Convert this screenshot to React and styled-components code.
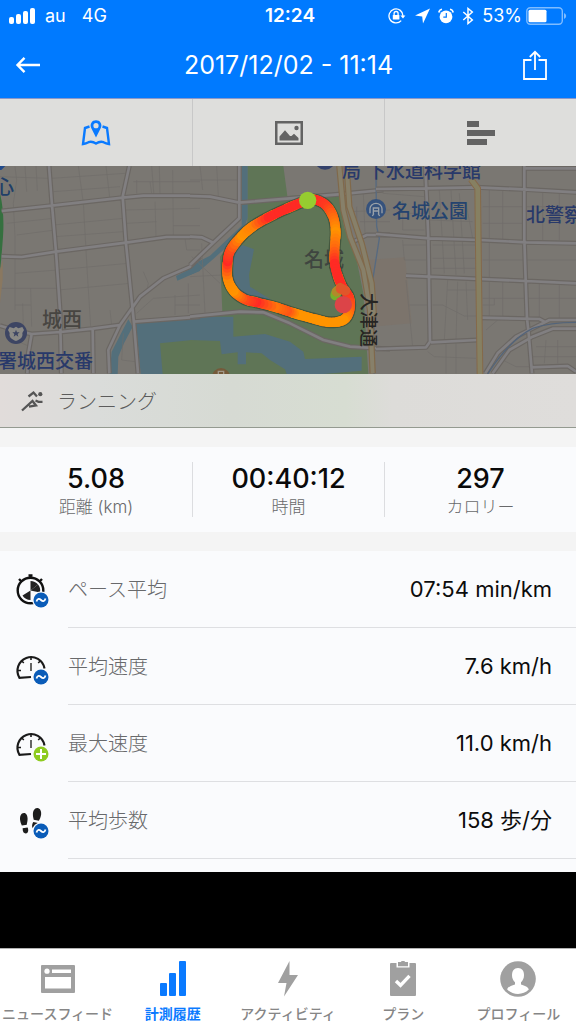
import React from "react";
import styled, { createGlobalStyle } from "styled-components";

const latin = `Inter, "Noto Sans CJK JP", sans-serif`;
const japanese = `"Noto Sans CJK JP", Inter, sans-serif`;

const GlobalStyle = createGlobalStyle`
  *, *::before, *::after { box-sizing: border-box; }
  body { margin: 0; background: #000; font-family: ${latin}; }
  button { margin: 0; padding: 0; border: 0; background: none; font: inherit; color: inherit; cursor: pointer; }
  svg { display: block; flex: none; }
`;

const Page = styled.div`
  min-height: 100vh;
  display: flex;
  flex-direction: column;
  background: #000;
`;

const Header = styled.header`
  background: #007aff;
  color: #fff;
`;

const StatusBar = styled.div`
  height: 32px;
  padding: 0 9px;
  display: grid;
  grid-template-columns: 1fr auto 1fr;
  align-items: center;
  font-size: 18px;
  line-height: 24px;
`;

const StatusGroup = styled.div`
  display: flex;
  align-items: center;
  justify-content: ${(p) => (p.$end ? "flex-end" : "flex-start")};
  gap: ${(p) => (p.$end ? 8 : 10)}px;
`;

const Network = styled.span`
  margin-left: 6px;
`;

const BatteryGroup = styled.span`
  display: flex;
  align-items: center;
  gap: 4px;
`;

const Clock = styled.time`
  font-size: 19px;
  font-weight: 600;
  padding-left: 4px;
`;

const NavBar = styled.div`
  height: 66px;
  padding: 0 26px 0 15px;
  display: grid;
  grid-template-columns: 40px 1fr 28px;
  align-items: center;
`;

const Title = styled.h1`
  margin: 0;
  font-size: 25px;
  line-height: 32px;
  font-weight: 400;
  text-align: center;
`;

const ViewTabs = styled.nav`
  height: 68px;
  display: grid;
  grid-template-columns: repeat(3, 1fr);
  background: #dededc;
  border-top: 1px solid #8b97c8;
`;

const ViewTab = styled.button`
  display: flex;
  align-items: center;
  justify-content: center;
  color: ${(p) => (p.$active ? "#0a7aff" : "#636363")};
  & + & { border-left: 1px solid #c8c8c8; }
`;

const MapPanel = styled.section`
  height: 208px;
  background: #7a7772;
  overflow: hidden;
  > svg { width: 100%; height: 100%; }
`;

const MapText = styled.text`
  font-family: ${japanese};
  font-weight: 500;
  font-size: ${(p) => p.$size || 19}px;
  fill: ${(p) => p.$fill || "#28396a"};
`;

const ActivityBar = styled.div`
  height: 54px;
  padding: 0 21px;
  display: flex;
  align-items: center;
  gap: 13px;
  border-bottom: 1px solid #949a90;
  background: linear-gradient(90deg, #e1dcda 0%, #dadcda 17%, #d6dad3 40%, #d7ddd2 60%, #dddcd9 68%, #dfdddb 100%);
  color: #5c5c5c;
  font-family: ${japanese};
  font-size: 20px;
  line-height: 28px;
  font-weight: 300;
`;

const Content = styled.main`
  background: #f4f4f4;
  padding-top: 19px;
`;

const Summary = styled.dl`
  margin: 0 0 19px;
  padding: 15px 0;
  display: grid;
  grid-template-columns: repeat(3, 1fr);
  background: #fafbfd;
`;

const SummaryItem = styled.div`
  height: 55px;
  padding-top: 2px;
  display: flex;
  flex-direction: column-reverse;
  justify-content: center;
  align-items: center;
  & + & { border-left: 1px solid #dcdde0; }
`;

const SummaryLabel = styled.dt`
  font-family: ${latin};
  font-size: 17px;
  line-height: 24px;
  font-weight: 300;
  color: #68696b;
`;

const SummaryValue = styled.dd`
  margin: 0;
  font-size: 27px;
  line-height: 32px;
  font-weight: 500;
  color: #0a0a0a;
`;

const MetricList = styled.dl`
  margin: 0;
  padding-bottom: 13px;
  background: #fafbfd;
`;

const Metric = styled.div`
  display: grid;
  grid-template-columns: 68px 1fr;
`;

const MetricIcon = styled.span`
  padding: 22px 0 0 14px;
`;

const MetricBody = styled.div`
  height: 77px;
  padding-right: 24px;
  display: flex;
  align-items: center;
  justify-content: space-between;
  border-bottom: 1px solid #dedfe2;
`;

const MetricLabel = styled.dt`
  font-family: ${japanese};
  font-size: 20px;
  line-height: 28px;
  font-weight: 300;
  color: #68696b;
`;

const MetricValue = styled.dd`
  margin: 0;
  font-size: 22px;
  line-height: 28px;
  color: #0c0c0c;
`;

const TabBar = styled.nav`
  height: 76px;
  margin-top: auto;
  display: grid;
  grid-template-columns: repeat(5, minmax(0, 1fr));
  background: #fff;
  border-top: 1px solid #b2b2b2;
`;

const TabItem = styled.button`
  display: flex;
  flex-direction: column;
  align-items: center;
  justify-content: flex-end;
  gap: 5px;
  color: ${(p) => (p.$active ? "#0a7aff" : "#a0a0a0")};
`;

const TabLabel = styled.span`
  font-family: ${japanese};
  font-size: 14px;
  line-height: 22px;
  font-weight: ${(p) => (p.$active ? 700 : 500)};
  white-space: nowrap;
  color: ${(p) => (p.$active ? "#0a7aff" : "#868686")};
`;

/* ---------- status icons ---------- */

const SignalIcon = () => (
  <svg width="26" height="16" viewBox="0 0 26 16" fill="#fff" aria-hidden="true">
    <rect x="0" y="9" width="5" height="7" rx="2" />
    <rect x="7" y="6" width="5" height="10" rx="2" />
    <rect x="14" y="3" width="5" height="13" rx="2" />
    <rect x="21" y="0" width="5" height="16" rx="2" />
  </svg>
);

const LockRotationIcon = () => (
  <svg width="18" height="16" viewBox="0 0 18 16" fill="none" stroke="#fff" strokeWidth="1.3" aria-hidden="true">
    <path d="M13.2 12.6A7 7 0 1 1 15 8" />
    <path d="M12.4 7.4h5L15 10.600z" fill="#fff" stroke="none" />
    <rect x="4.800" y="7" width="6.600" height="4.600" rx=".6" fill="#fff" stroke="none" />
    <path d="M6.100 7V5.500a2 2 0 0 1 4 0V7" />
  </svg>
);

const LocationIcon = () => (
  <svg width="16" height="16" viewBox="0 0 16 16" fill="#fff" aria-hidden="true">
    <path d="M16 .5 9 15.500 8.200 8.500 1 7.500z" />
  </svg>
);

const AlarmIcon = () => (
  <svg width="16" height="16" viewBox="0 0 16 16" fill="none" aria-hidden="true">
    <circle cx="8" cy="8.800" r="6.400" fill="#fff" />
    <path d="M.8 4.500A4 4 0 0 1 4 1.300M15.200 4.500A4 4 0 0 0 12 1.300" stroke="#fff" strokeWidth="1.600" />
    <path d="M8.300 5v4.200H5.300" stroke="#007aff" strokeWidth="1.200" />
  </svg>
);

const BluetoothIcon = () => (
  <svg width="12" height="18" viewBox="0 0 12 18" fill="none" stroke="#fff" strokeWidth="1.500" aria-hidden="true">
    <path d="m1.300 5 9 8L6 16.500v-15L10.300 5l-9 8" />
  </svg>
);

const BatteryIcon = () => (
  <svg width="41" height="18" viewBox="0 0 41 18" fill="none" aria-hidden="true">
    <rect x=".8" y=".8" width="35.500" height="16.400" rx="3.500" stroke="#7fbcff" strokeWidth="1.400" />
    <rect x="2.500" y="2.800" width="18" height="12.400" rx="1.500" fill="#fff" />
    <path d="M38 6v6q2.200-1 2.200-3T38 6z" fill="#7fbcff" />
  </svg>
);

/* ---------- navigation icons ---------- */

const BackIcon = () => (
  <svg width="26" height="18" viewBox="0 0 26 18" fill="none" stroke="#fff" strokeWidth="2.400" aria-hidden="true">
    <path d="M25 9H3M9.500 1.800 2.500 9l7 7.200" />
  </svg>
);

const ShareIcon = () => (
  <svg width="26" height="31" viewBox="0 0 26 31" fill="none" stroke="#fff" strokeWidth="1.800" aria-hidden="true">
    <path d="M9.500 10H2v19h22V10h-7.500M13 20V2M7.800 7 13 1.800 18.200 7" />
  </svg>
);

const MapPinIcon = () => (
  <svg width="30" height="28" viewBox="0 0 30 28" fill="none" stroke="currentColor" aria-hidden="true">
    <path d="M8.500 7.500 4 9 2 25q3-.5 5.500-1.800Q11 22 15 24.500q4-2.500 7.500-1.300Q25 24.500 28 25L26 9l-4.500-1.500" strokeWidth="2.400" />
    <path d="M15 18.500 10.200 9a5.400 5.400 0 1 1 9.600 0zM15 4.100a2.600 2.600 0 1 0 0 5.200 2.600 2.600 0 0 0 0-5.200z" fill="currentColor" fillRule="evenodd" stroke="none" />
  </svg>
);

const PhotoIcon = () => (
  <svg width="28" height="24" viewBox="0 0 28 24" fill="currentColor" aria-hidden="true">
    <path d="M0 0h28v24H0zM2.500 2.500v19h23v-19z" fillRule="evenodd" />
    <path d="M4.500 19.500v-4L10 9.300l5 5.700h1.500l2.500-2.300 4.500 4.300v2.500z" />
    <circle cx="21.500" cy="7" r="2.200" />
  </svg>
);

const BarsIcon = () => (
  <svg width="28" height="24" viewBox="0 0 28 24" fill="currentColor" aria-hidden="true">
    <path d="M0 0h12v6H0zM0 9h28v6H0zM0 18h20v6H0z" />
  </svg>
);

const RunIcon = () => (
  <svg width="23" height="22" viewBox="0 0 23 22" fill="none" stroke="#555" strokeWidth="2.300" aria-hidden="true">
    <path d="M1 20.500 11.500 11l3.500 4.500-7 1.200M7.500 6.500l5-4 3.500 4M14.500 10.500l3 1.300h4" />
    <circle cx="19.300" cy="4.200" r="2.100" fill="#555" stroke="none" />
  </svg>
);

/* ---------- metric icons ---------- */

const AverageBadge = () => (
  <g>
    <circle cx="27" cy="27" r="8.800" fill="#fafbfd" />
    <circle cx="27" cy="27" r="7.500" fill="#0a5cb8" />
    <path d="M22.500 28.500c1-3.500 3-3 4.500-1.500s3.500 2 4.500-1.500" fill="none" stroke="#fff" strokeWidth="1.800" />
  </g>
);

const MaxBadge = () => (
  <g>
    <circle cx="27" cy="27" r="8.800" fill="#fafbfd" />
    <circle cx="27" cy="27" r="7.500" fill="#8ecb20" />
    <path d="M27 22v10M22 27h10" stroke="#fff" strokeWidth="2" />
  </g>
);

const PaceIcon = () => (
  <svg width="36" height="36" viewBox="0 0 36 36" fill="none" aria-hidden="true">
    <circle cx="16.500" cy="17.500" r="12.800" stroke="#111" strokeWidth="2.400" />
    <path d="M16.500 4.500V2M14.500 2.500h4M7 8 5 6M26 8l2-2" stroke="#111" strokeWidth="2.400" />
    <path d="M16.500 17.500V8a9.500 9.500 0 0 1 7.500 3.500z" fill="#222" />
    <path d="M16.500 17.500 24 11.500a9.500 9.500 0 0 1 2 8zM16.500 17.500V27a9.500 9.500 0 0 1-8-4.500z" fill="#222" />
    <AverageBadge />
  </svg>
);

const GaugeIcon = ({ max }) => (
  <svg width="36" height="36" viewBox="0 0 36 36" fill="none" stroke="#1a1a1a" aria-hidden="true">
    <path d="M17 27 5.500 27.800A13.600 13.600 0 1 1 30.500 18.500" strokeWidth="2.200" />
    <path d="M17 7v3M7.800 11l2 2M26.200 11l-2 2M4 20.500h3M30 20.500h-3" strokeWidth="1.600" />
    <path d="M17 13v8" stroke="#555" strokeWidth="1.800" />
    {max ? <g stroke="none"><MaxPlus /></g> : <g stroke="none"><AverageBadge /></g>}
  </svg>
);

const MaxPlus = MaxBadge;

const StepsIcon = () => (
  <svg width="36" height="36" viewBox="0 0 36 36" fill="#1c1c1c" aria-hidden="true">
    <path d="M10 9c-3 0-4.500 3.500-3.800 7.500.3 2 1 3.500 1.600 5l5-.7c.2-2 .8-3.500.8-6C13.600 11.500 12.300 9 10 9z" />
    <path d="m8.600 24.300 5-.8c1.300 3 .4 5.800-1.800 6-2 .1-3.200-1.700-3.200-5.200z" />
    <path d="M23.500 4c-3-.3-4.500 3-4.600 6-.1 2.500.6 4 .8 5.800l5.200 1c.8-1.500 1.800-3.500 2.200-6C27.600 7.300 26.200 4.300 23.500 4z" />
    <path d="m19.200 18 4.800 1-1 4-4 1.500c-1.500-1.500-1-4 .2-6.500z" />
    <AverageBadge />
  </svg>
);

/* ---------- bottom tab icons ---------- */

const FeedIcon = () => (
  <svg width="36" height="36" viewBox="0 0 36 36" aria-hidden="true">
    <path d="M2 4h32a1 1 0 0 1 1 1v26a1 1 0 0 1-1 1H2a1 1 0 0 1-1-1V5a1 1 0 0 1 1-1zM5 16v11.500h26V16zM12 8.500v3.500h19V8.500z" fill="currentColor" fillRule="evenodd" />
    <circle cx="7" cy="10.200" r="2.600" fill="#fff" />
  </svg>
);

const HistoryIcon = () => (
  <svg width="36" height="36" viewBox="0 0 36 36" fill="currentColor" aria-hidden="true">
    <rect x="5" y="22" width="7" height="13" rx="1" />
    <rect x="14" y="12" width="7" height="23" rx="1" />
    <rect x="24" y="0" width="7" height="35" rx="1" />
  </svg>
);

const BoltIcon = () => (
  <svg width="36" height="36" viewBox="0 0 36 36" fill="currentColor" aria-hidden="true">
    <path d="M19.500 0 8 22h8.500l-2.500 13.500L28 14h-8.500z" />
  </svg>
);

const PlanIcon = () => (
  <svg width="36" height="36" viewBox="0 0 36 36" aria-hidden="true">
    <rect x="5" y="2" width="26" height="33" rx="1" fill="currentColor" />
    <path d="M11.500 0h13v6.500h-13z" fill="#fff" />
    <path d="M13 1h3q.5-1.500 2-1.500T20 1h3v4.300H13z" fill="currentColor" />
    <path d="m11 20 4.500 4.300 9-9.500" fill="none" stroke="#fff" strokeWidth="3.400" />
  </svg>
);

const ProfileIcon = () => (
  <svg width="36" height="36" viewBox="0 0 36 36" aria-hidden="true">
    <circle cx="18" cy="18" r="17.800" fill="currentColor" />
    <path d="M18 7c-4 0-6 3-6 7.200 0 3 1.300 5.500 3 7v2.200C11 25 8 25.500 7.200 28.500a15.500 15.500 0 0 0 21.600 0C28 25.500 25 25 21 23.400v-2.200c1.700-1.500 3-4 3-7C24 10 22 7 18 7z" fill="#fff" />
  </svg>
);

/* ---------- map drawing ---------- */

const streetsWest =
  "M147 18 156 135 168 275 180 450 184 640M388 18 368 110 378 250 402 490 414 640M5 153 155 137 368 113 430 107H570M5 289 65 291 168 275 378 248 500 231H570M600 290 570 320 490 355 420 410 360 495 325 570 328 640M0 497 50 512 95 522 182 516 278 506 360 495M95 522 85 580 82 640M278 506 280 640M402 485 600 470";
const streetsCentre =
  "M0 108 60 110 148 128 445 103 580 90M148 18V175L70 248 0 315M0 230 35 232 70 248M0 470 150 455 220 457 300 490 400 540 480 560 600 567M600 225 530 225 490 245";
const streetsEast =
  "M0 87 150 85 300 82 440 88 600 97M0 222 160 235 310 240 450 247 600 250M90 347 310 357 450 363 600 370M148 18 157 235 162 545 150 562 0 567M445 18V240L453 475 458 520 468 640M310 473 490 477 505 485M165 547 305 540M328 640 365 580 420 530 520 480H600M350 640 400 570 470 530 530 506H600M465 622 575 618 600 635M445 25H600";
const lanesWest =
  "M45 20 50 60 40 130 45 230 45 450M75 18 80 95M108 18 112 92M235 18 250 130 262 340 272 500M318 18 330 120M455 18 462 110M478 18 480 105M518 30 520 225M0 50 145 55M155 55 375 40M160 95 360 80M20 190 160 175M50 225 165 210M160 195 370 175M165 230 370 215M165 330 385 310M5 385 175 385M45 340 172 330M175 390 390 370M375 150 600 145M380 190 470 185M520 197H600M410 60 410 100M450 65 455 100M400 65 600 65M465 125 468 230M555 235 560 270H600M430 335 445 370 440 395M410 460 460 415 600 405M525 405V465M565 370V460M525 435H600M68 430 70 500M92 385 95 500M45 435H92M330 450 335 495M20 530 90 560M370 520 365 600 405 605";
const lanesCentre =
  "M30 18 38 90M80 18 85 110M0 60 145 60M35 250 45 460M0 350 95 345M5 290 90 370M500 140V230M520 100 525 220M480 155 600 150M510 185H600M560 40V90";
const lanesEast =
  "M20 100 145 110M80 120V210M80 210H145M100 160H145M190 90 205 340M225 90 240 345M250 100 265 340M270 130 290 235M160 180 290 185M80 240 85 300H150M80 255H150M170 255H300M170 295H300M170 325H300M215 360 205 540M245 365 240 540M270 365 275 480M170 435H200L265 468H305M215 390H300M100 435H155M90 360 110 560M340 90V470M380 90V240M500 90V240M550 100V240M320 140H600M320 190H440M320 300H600M380 365V470M490 370V475M550 370V475M320 415H600M355 415V435H320M155 575 175 590 300 595M210 550V640M240 550V640M330 510 365 480M510 540 505 610M545 540V610M480 560H600M465 590H600M360 590 420 620H460";
const mainRoad =
  "M448 18 460 150 480 230 520 330 540 450 548 640M470 18 478 140 515 250 545 370 552 470";

const routeNodes = [
  [353, 121, 0], [382, 121, 0], [410, 138, 0.15], [430, 172, 0.6], [437, 215, 1],
  [434, 265, 0.6], [434, 310, 0], [444, 350, 0], [458, 382, 0], [477, 412, 0.1],
  [479, 450, 0.5], [462, 479, 1], [420, 487, 1], [370, 476, 1], [320, 462, 1],
  [292, 453, 0.4], [255, 441, 0.7], [200, 427, 0], [165, 418, 0.3], [132, 394, 1],
  [113, 355, 0.9], [113, 305, 0], [122, 270, 0.3], [155, 228, 1], [190, 198, 0.8],
  [235, 172, 0], [290, 146, 0], [353, 121, 0],
];

const spline = (a, b, c, d, t) =>
  0.5 * (2 * b + (c - a) * t + (2 * a - 5 * b + 4 * c - d) * t * t + (3 * b - a - 3 * c + d) * t * t * t);

const routeSamples = routeNodes.slice(0, -1).flatMap((node, i) => {
  const last = routeNodes.length - 1;
  const before = routeNodes[i === 0 ? last - 1 : i - 1];
  const next = routeNodes[i + 1];
  const after = routeNodes[i + 2 > last ? 1 : i + 2];
  return [0, 0.2, 0.4, 0.6, 0.8].map((t) => ({
    x: spline(before[0], node[0], next[0], after[0], t),
    y: spline(before[1], node[1], next[1], after[1], t),
    heat: node[2] + (next[2] - node[2]) * t,
  }));
});

const routeColor = (heat) => `rgb(255, ${Math.round(42 + heat * 106)}, ${Math.round(36 - heat * 36)})`;
const routeOutline = `M${routeSamples.map((s) => `${s.x} ${s.y}`).join("L")}Z`;

const Streets = ({ lanes, roads }) => (
  <g fill="none" strokeLinejoin="round">
    <path d={lanes} stroke="#706d69" strokeWidth="2" />
    <path d={roads} stroke="#6b6763" strokeWidth="15" />
    <path d={roads} stroke="#817f81" strokeWidth="8" />
  </g>
);

const RouteMap = () => (
  <svg viewBox="0 0 576 208" preserveAspectRatio="xMidYMid slice" role="img" aria-label="ルートマップ">
    <svg width="576" height="208" viewBox="0 18 1728 624">
      <rect y="18" width="1728" height="624" fill="#7a7772" />
      <g>
        <path d="M0 100q14 60 9 130T0 330z" fill="#35703f" />
        <path d="M0 330l8-30v60L0 430z" fill="#8a7860" />
        <path d="M408 490 600 474V642H422z" fill="#536f7b" />
        <path d="M480 550 600 538V642H488z" fill="#5f7556" />
        <path d="m385 478-50 97-6 67h24l2-52 17-40 26-50zM528 348 600 312V332L532 362z" fill="#536f7b" />
      </g>
      <g transform="translate(570)">
        <path d="M172 18H280L292 108 445 100 462 200 500 300 520 400 535 642H0V470L97 455 90 290 172 190z" fill="#5f7556" />
        <path d="M155 18h18v155l-15 45-95 85-35 30-28 12v-28l60-30 95-90zM0 470H130V530L225 522 300 545 340 575 345 597 515 590V632L400 642H290L285 628 240 600 215 580 168 577V613H143V577L95 583 90 543 0 540zM158 255 192 268 177 345 180 380 245 420 130 400V270z" fill="#536f7b" />
        <path d="M530 300 645 292 665 490 545 500z" fill="#7c746c" />
      </g>
      <Streets lanes={lanesWest} roads={streetsWest} />
      <g transform="translate(570)">
        <Streets lanes={lanesCentre} roads={streetsCentre} />
        <path d="M558 60 560 200 568 235 545 380M552 500V642" fill="none" stroke="#576a80" strokeWidth="4" />
      </g>
      <g transform="translate(1128)">
        <Streets lanes={lanesEast} roads={streetsEast} />
        <path d="M335 642Q400 540 470 505 520 487 600 487" fill="none" stroke="#53647a" strokeWidth="4" />
      </g>
      <g fill="none" strokeLinejoin="round">
        <path d={mainRoad} transform="translate(570)" stroke="#80694b" strokeWidth="19" />
        <path d={mainRoad} transform="translate(570)" stroke="#87806a" strokeWidth="12" />
        <path d="M1413 58 1433 85 1436 350 1440 642" stroke="#85694a" strokeWidth="20" />
        <path d="M1413 58 1433 85 1436 350 1440 642" stroke="#868062" strokeWidth="14" />
      </g>
      <circle cx="48" cy="519" r="33" fill="#3d4563" />
      <path d="m48 500 7 5 12-4 5 9-5 9c3 14-8 20-19 24-11-4-22-10-19-24l-5-9 5-9 12 4z" fill="#8a8985" />
      <path d="m48 509 3 8h8l-6 5 2 8-7-5-7 5 2-8-6-5h8z" fill="#3d4563" />
      <circle cx="975" cy="-2" r="31" fill="#34426b" />
      <circle cx="1128" cy="147" r="30" fill="#35527d" />
      <path d="M1110 160v-14a18 16 0 0 1 36 0v14M1120 162v-18h16v18M1120 153h16M1122 160l-5 8M1134 160l5 8" fill="none" stroke="#9aa1a8" strokeWidth="4" />
      <circle cx="663" cy="651" r="27" fill="#755a3a" />
      <path d="M655 642v-8h16v8" fill="none" stroke="#a19889" strokeWidth="4" />
      <path d="M0 18h16L4 30H0z" fill="#214a8a" />
    </svg>
    <MapText x="-5" y="28" $fill="#203e68">心</MapText>
    <MapText x="42" y="161" $size={20} $fill="#474541">城西</MapText>
    <MapText x="-2" y="202">署城西交番</MapText>
    <MapText x="342" y="12">局</MapText>
    <MapText x="367" y="12">下水道科学館</MapText>
    <MapText x="392" y="52" $fill="#24436f">名城公園</MapText>
    <MapText x="526" y="56">北警察</MapText>
    <MapText x="304" y="101" $size={20} $fill="#3f4540">名城</MapText>
    <MapText x="127" y="-362" transform="rotate(90)" $size={18} $fill="#262523">大津通</MapText>
    <svg width="576" height="208" viewBox="0 18 1728 624">
      <g transform="translate(570)" fill="none" strokeLinecap="round" strokeLinejoin="round">
        <path d={routeOutline} stroke="#34432e" strokeOpacity=".6" strokeWidth="36" />
        <path d={routeOutline} stroke="#ff9400" strokeWidth="30" strokeDasharray="24 46" />
        <path d={routeOutline} stroke="#ff6a10" strokeWidth="28" />
        {routeSamples.map((s, i) => {
          const next = routeSamples[(i + 1) % routeSamples.length];
          return <path key={i} d={`M${s.x} ${s.y}L${next.x} ${next.y}`} stroke={routeColor(s.heat)} strokeWidth="28" />;
        })}
        <path d="M436 406 440 395" stroke="#76b02a" strokeWidth="30" />
        <path d="M440 395 451 385" stroke="#b08a2a" strokeWidth="30" />
        <path d="M452 386 466 392" stroke="#e0562a" strokeWidth="30" />
        <circle cx="353" cy="121" r="26" fill="#96cc30" stroke="none" />
        <circle cx="460" cy="434" r="26" fill="#dc4448" stroke="none" />
      </g>
    </svg>
  </svg>
);

/* ---------- screen ---------- */

const summary = [
  { label: "距離 (km)", value: "5.08" },
  { label: "時間", value: "00:40:12" },
  { label: "カロリー", value: "297" },
];

const metrics = [
  { label: "ペース平均", value: "07:54 min/km", icon: <PaceIcon /> },
  { label: "平均速度", value: "7.6 km/h", icon: <GaugeIcon /> },
  { label: "最大速度", value: "11.0 km/h", icon: <GaugeIcon max /> },
  { label: "平均歩数", value: "158 歩/分", icon: <StepsIcon /> },
];

const tabs = [
  { label: "ニュースフィード", icon: <FeedIcon /> },
  { label: "計測履歴", icon: <HistoryIcon />, active: true },
  { label: "アクティビティ", icon: <BoltIcon /> },
  { label: "プラン", icon: <PlanIcon /> },
  { label: "プロフィール", icon: <ProfileIcon /> },
];

export default function App() {
  return (
    <Page lang="ja">
      <GlobalStyle />
      <Header>
        <StatusBar>
          <StatusGroup>
            <SignalIcon />
            <span>au</span>
            <Network>4G</Network>
          </StatusGroup>
          <Clock>12:24</Clock>
          <StatusGroup $end>
            <LockRotationIcon />
            <LocationIcon />
            <AlarmIcon />
            <BluetoothIcon />
            <BatteryGroup>
              <span>53%</span>
              <BatteryIcon />
            </BatteryGroup>
          </StatusGroup>
        </StatusBar>
        <NavBar>
          <button aria-label="戻る"><BackIcon /></button>
          <Title>2017/12/02 - 11:14</Title>
          <button aria-label="共有"><ShareIcon /></button>
        </NavBar>
      </Header>
      <ViewTabs>
        <ViewTab $active aria-label="マップ"><MapPinIcon /></ViewTab>
        <ViewTab aria-label="写真"><PhotoIcon /></ViewTab>
        <ViewTab aria-label="グラフ"><BarsIcon /></ViewTab>
      </ViewTabs>
      <MapPanel><RouteMap /></MapPanel>
      <ActivityBar>
        <RunIcon />
        <span>ランニング</span>
      </ActivityBar>
      <Content>
        <Summary>
          {summary.map((item) => (
            <SummaryItem key={item.label}>
              <SummaryLabel>{item.label}</SummaryLabel>
              <SummaryValue>{item.value}</SummaryValue>
            </SummaryItem>
          ))}
        </Summary>
        <MetricList>
          {metrics.map((item) => (
            <Metric key={item.label}>
              <MetricIcon>{item.icon}</MetricIcon>
              <MetricBody>
                <MetricLabel>{item.label}</MetricLabel>
                <MetricValue>{item.value}</MetricValue>
              </MetricBody>
            </Metric>
          ))}
        </MetricList>
      </Content>
      <TabBar>
        {tabs.map((tab) => (
          <TabItem key={tab.label} $active={tab.active}>
            {tab.icon}
            <TabLabel $active={tab.active}>{tab.label}</TabLabel>
          </TabItem>
        ))}
      </TabBar>
    </Page>
  );
}
